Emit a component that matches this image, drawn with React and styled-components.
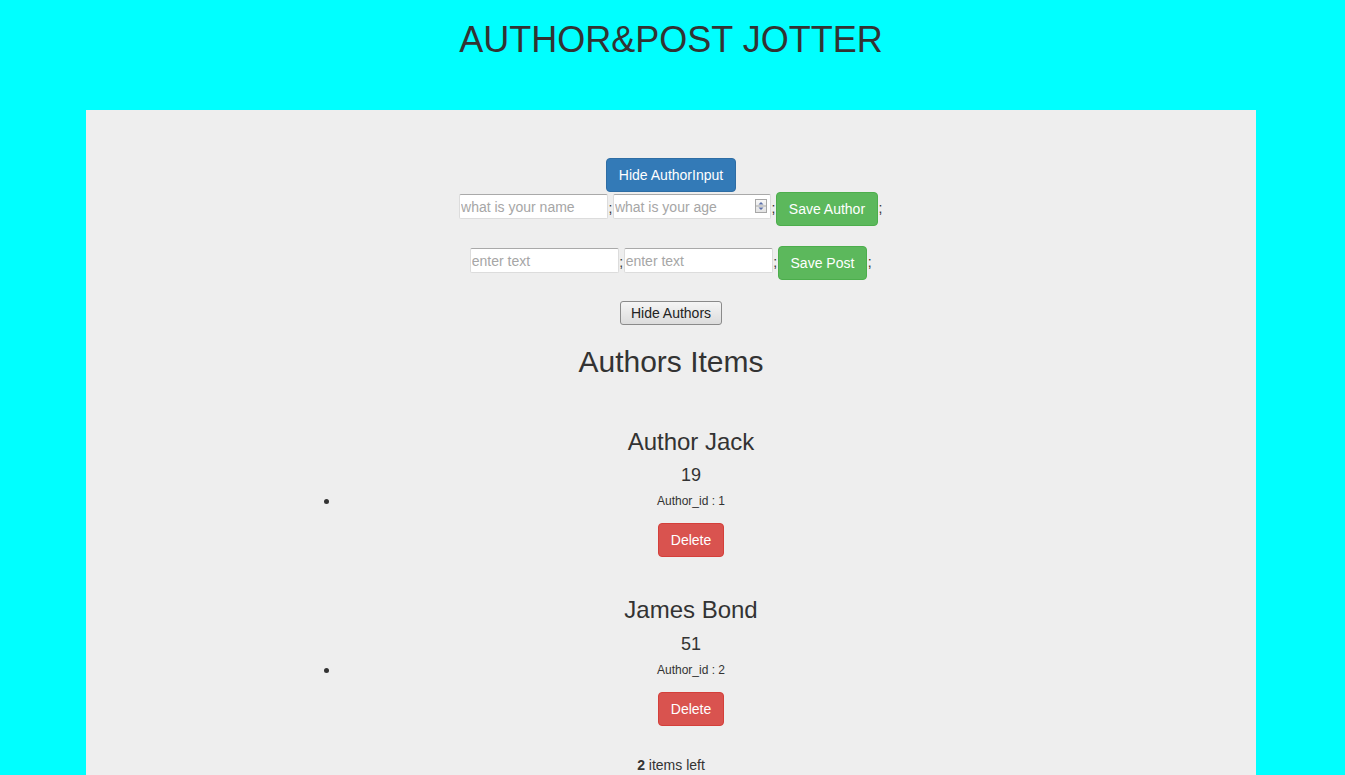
import React from 'react';
import styled, { createGlobalStyle } from 'styled-components';

const GlobalStyle = createGlobalStyle`
  html, body {
    margin: 0;
    padding: 0;
  }

  body {
    padding-right: 3px;
    background-color: #00ffff;
    color: #333;
    font-family: "Liberation Sans", Arial, Helvetica, sans-serif;
    font-size: 14px;
    line-height: 1.42857;
  }

  * {
    box-sizing: border-box;
  }
`;

const Header = styled.header`
  height: 110px;
  padding-top: 20px;
  text-align: center;
`;

const Title = styled.h1`
  margin: 0;
  font-size: 36px;
  font-weight: 500;
  line-height: 1.1;
`;

const Jumbotron = styled.main`
  width: 1170px;
  margin: 0 auto;
  padding: 48px 60px;
  background-color: #eee;
  text-align: center;
`;

const FormRow = styled.div`
  display: flex;
  justify-content: center;
  align-items: flex-start;
  margin-top: ${(p) => p.$gap || 0}px;
`;

const TextInput = styled.input`
  width: ${(p) => p.$width || 149}px;
  height: 25px;
  margin: 2px 0 0;
  padding: 1px;
  border: 1px solid #dcdcdc;
  border-top-color: #a9a9a9;
  border-radius: 2px;
  background: #fff;
  color: #333;
  font: inherit;
  outline: none;

  &::placeholder {
    color: #a6a6a6;
  }
`;

const NumberField = styled.div`
  display: flex;
  align-items: center;
  width: 158px;
  height: 25px;
  margin-top: 2px;
  border: 1px solid #dcdcdc;
  border-top-color: #a9a9a9;
  border-radius: 2px;
  background: #fff;
`;

const NumberInput = styled.input`
  flex: 1;
  min-width: 0;
  height: 100%;
  padding: 1px;
  border: 0;
  background: transparent;
  color: #333;
  font: inherit;
  outline: none;

  &::placeholder {
    color: #a6a6a6;
  }
`;

const Spinner = styled.svg`
  flex: none;
  margin: 0 3px 1px 2px;
`;

const Sep = styled.span`
  padding: 6px 0.5px 0;
  line-height: 20px;
`;

const Btn = styled.button`
  display: inline-block;
  margin: 0;
  padding: 6px 12px;
  border: 1px solid ${(p) => p.$border};
  border-radius: 4px;
  background-color: ${(p) => p.$bg};
  color: #fff;
  font: inherit;
  line-height: 20px;
  cursor: pointer;
`;

const ToggleBtn = styled.button`
  margin: 21px 0 0;
  padding: 0 10px;
  height: 24px;
  border: 1px solid #8a8a8a;
  border-radius: 3px;
  background: linear-gradient(#f5f5f5, #dcdcdc);
  color: #222;
  font: inherit;
  line-height: 20px;
`;

const SectionTitle = styled.h2`
  margin: 20px 0 0;
  font-size: 30px;
  font-weight: 500;
  line-height: 1.1;
`;

const ListColumn = styled.ul`
  width: 780px;
  margin: 50px auto 0;
  padding: 0 15px;
  list-style: none;
  display: flex;
  flex-direction: column;
  gap: 39px;
`;

const Item = styled.li`
  display: grid;
  grid-template-columns: 40px 1fr;
  justify-items: center;
`;

const Cell = styled.div`
  grid-column: 2;
`;

const AuthorName = styled(Cell)`
  margin-top: 1px;
  font-size: 24px;
  line-height: 1.1;
`;

const AuthorAge = styled(Cell)`
  margin-top: 11px;
  font-size: 18px;
  line-height: 1.1;
`;

const AuthorId = styled(Cell)`
  margin-top: 9px;
  font-size: 12px;
  line-height: 1.1;
`;

const Bullet = styled.span`
  grid-column: 1;
  grid-row: 3;
  align-self: center;
  justify-self: end;
  width: 5px;
  height: 5px;
  margin: 9px 7px 0 0;
  border-radius: 50%;
  background: #333;
`;

const DeleteCell = styled(Cell)`
  margin-top: 15px;
`;

const Footer = styled.div`
  margin-top: 29px;
  line-height: 20px;
`;

const authors = [
  { id: 1, name: 'Author Jack', age: 19 },
  { id: 2, name: 'James Bond', age: 51 },
];

function SpinIcon() {
  return (
    <Spinner width="12" height="14" viewBox="0 0 12 14">
      <defs>
        <linearGradient id="spin" x1="0" y1="0" x2="0" y2="1">
          <stop offset="0" stopColor="#f7f7f7" />
          <stop offset="1" stopColor="#e2e2e2" />
        </linearGradient>
      </defs>
      <rect x="0.5" y="0.5" width="11" height="13" fill="url(#spin)" stroke="#a7a7a7" />
      <line x1="0.5" y1="7" x2="11.5" y2="7" stroke="#a7a7a7" />
      <path d="M6 3 L8.5 5.5 L3.5 5.5 Z" fill="#5a6ea8" />
      <path d="M6 11 L8.5 8.5 L3.5 8.5 Z" fill="#5a6ea8" />
    </Spinner>
  );
}

export default function App() {
  return (
    <>
      <GlobalStyle />
      <Header>
        <Title>AUTHOR&amp;POST JOTTER</Title>
      </Header>
      <Jumbotron>
        <Btn $bg="#337ab7" $border="#2e6da4">Hide AuthorInput</Btn>
        <FormRow>
          <TextInput placeholder="what is your name" />
          <Sep>;</Sep>
          <NumberField>
            <NumberInput placeholder="what is your age" />
            <SpinIcon />
          </NumberField>
          <Sep>;</Sep>
          <Btn $bg="#5cb85c" $border="#4cae4c">Save Author</Btn>
          <Sep>;</Sep>
        </FormRow>
        <FormRow $gap={20}>
          <TextInput placeholder="enter text" />
          <Sep>;</Sep>
          <TextInput placeholder="enter text" />
          <Sep>;</Sep>
          <Btn $bg="#5cb85c" $border="#4cae4c">Save Post</Btn>
          <Sep>;</Sep>
        </FormRow>
        <ToggleBtn>Hide Authors</ToggleBtn>
        <SectionTitle>Authors Items</SectionTitle>
        <ListColumn>
          {authors.map((a) => (
            <Item key={a.id}>
              <AuthorName>{a.name}</AuthorName>
              <AuthorAge>{a.age}</AuthorAge>
              <AuthorId>Author_id : {a.id}</AuthorId>
              <Bullet />
              <DeleteCell>
                <Btn $bg="#d9534f" $border="#d43f3a">Delete</Btn>
              </DeleteCell>
            </Item>
          ))}
        </ListColumn>
        <Footer>
          <strong>2</strong> items left
        </Footer>
      </Jumbotron>
    </>
  );
}
